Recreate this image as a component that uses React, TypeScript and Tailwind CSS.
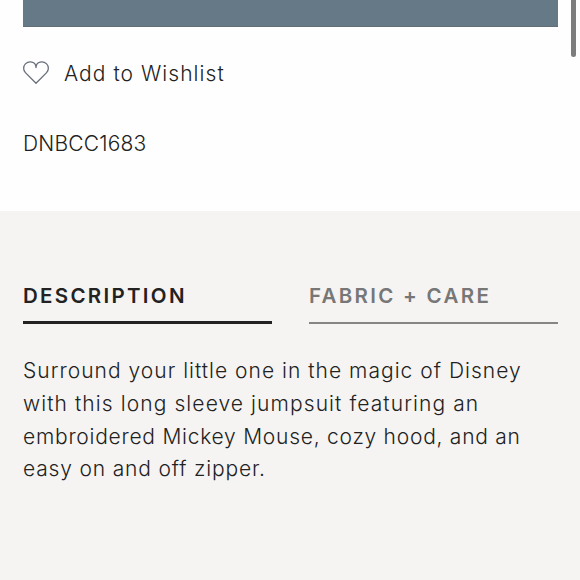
import React from "react";

const lines = [
  { text: "Surround your little one in the magic of Disney", tracking: "tracking-[1.02px]" },
  { text: "with this long sleeve jumpsuit featuring an", tracking: "tracking-[1.09px]" },
  { text: "embroidered Mickey Mouse, cozy hood, and an", tracking: "tracking-[0.75px]" },
  { text: "easy on and off zipper.", tracking: "tracking-[0.83px]" },
];

export default function App() {
  return (
    <main className="flex h-[580px] w-[580px] flex-col overflow-hidden bg-[#fefefe] font-['Inter',sans-serif] text-[#222]">
      <section className="relative h-[211px] shrink-0 px-[23px]">
        <div className="h-[27px] w-[535px] border-b border-[#626f79] bg-[#657986]" />
        <div className="absolute top-0 right-[4px] h-[57px] w-[5px] rounded-b-full bg-[#7d7d7d]" />
        <button className="mt-[30px] flex h-8 items-center gap-[14px]">
          <svg width="27" height="24" viewBox="0 0 27 24" fill="none" stroke="#686e7b" strokeWidth="1.3" strokeLinejoin="round">
            <path d="M13 22.3 L2.4 11.6 A6.3 6.3 0 0 1 2.4 2.9 C5.8 -0.3 12.8 0.2 13 6.5 C13.2 0.2 20.2 -0.3 23.6 2.9 A6.3 6.3 0 0 1 23.6 11.6 Z" />
          </svg>
          <span className="pt-px text-[21px] font-light tracking-[1.05px] whitespace-nowrap">Add to Wishlist</span>
        </button>
        <p className="mt-[39px] text-[21px] leading-8 font-light tracking-[0.2px]">DNBCC1683</p>
      </section>
      <section className="flex-1 bg-[#f5f4f2] px-[23px] pt-[69px]">
        <div className="grid w-[535px] grid-cols-2 gap-[37px] text-[20.5px] leading-8">
          <div className="h-[44px] border-b-[3px] border-[#222] font-semibold tracking-[2.3px]">DESCRIPTION</div>
          <div className="h-[44px] border-b-2 border-[#858583] font-semibold tracking-[2.3px] text-[#777]">FABRIC + CARE</div>
        </div>
        <div className="mt-[31px] text-[21px] leading-[32.8px] font-light whitespace-nowrap">
          {lines.map((l) => (
            <p key={l.text} className={l.tracking}>{l.text}</p>
          ))}
        </div>
      </section>
    </main>
  );
}
